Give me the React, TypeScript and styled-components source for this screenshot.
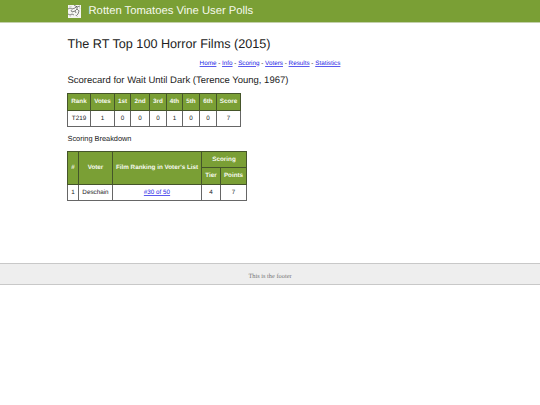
import React from "react";
import styled, { createGlobalStyle } from "styled-components";

const GlobalStyle = createGlobalStyle`
  * { box-sizing: border-box; }
  body {
    margin: 0;
    background: #fff;
    color: #222;
    font-family: "Liberation Sans", Arial, sans-serif;
    text-rendering: geometricPrecision;
  }
`;

const TopBar = styled.header`
  height: 23px;
  padding: 0 67.5px;
  display: flex;
  align-items: center;
  gap: 8px;
  background: #7a9f35;
  border-bottom: 1px solid #c3d0ab;
`;

const Logo = styled.svg`
  width: 13px;
  height: 13px;
  flex: none;
`;

const SiteName = styled.div`
  color: #f7faef;
  font-size: 11.25px;
  line-height: 20px;
  white-space: nowrap;
`;

const Main = styled.main`
  height: 240px;
  padding: 13.5px 67.5px 0;
`;

const PageTitle = styled.h1`
  margin: 0;
  font-size: 12.65px;
  line-height: 15px;
  font-weight: 400;
`;

const Nav = styled.nav`
  margin-top: 8px;
  font-size: 6.3px;
  line-height: 8px;
  text-align: center;
`;

const Link = styled.a`
  color: #1a1ae6;
  text-decoration: underline;
  text-decoration-color: #5a5aee;
`;

const FilmTitle = styled.h2`
  margin: 7px 0 0;
  font-size: 9.5px;
  line-height: 12px;
  font-weight: 400;
`;

const SectionTitle = styled.h3`
  margin: 7px 0;
  font-size: 7.38px;
  line-height: 10px;
  font-weight: 400;
`;

const Table = styled.table<{ $width: number; $top?: number }>`
  width: ${(p) => p.$width}px;
  margin-top: ${(p) => p.$top ?? 0}px;
  margin-left: -0.5px;
  table-layout: fixed;
  border-collapse: collapse;
  font-size: 6.3px;
  line-height: 8px;
  text-align: center;
  white-space: nowrap;
`;

const Col = styled.col<{ $width: number }>`
  width: ${(p) => p.$width}px;
`;

const Row = styled.tr<{ $height: number }>`
  height: ${(p) => p.$height}px;
`;

const Head = styled.th`
  padding: 0;
  border: 1px solid #45552a;
  background: #7a9f35;
  color: #f7faef;
`;

const Cell = styled.td`
  padding: 0;
  border: 1px solid #666;
`;

const Footer = styled.footer`
  height: 22px;
  padding-top: 4px;
  display: flex;
  align-items: center;
  justify-content: center;
  background: #eee;
  border-top: 1px solid #c8c8c8;
  border-bottom: 1px solid #c8c8c8;
  color: #777;
  font-family: "Liberation Serif", "Times New Roman", serif;
  font-size: 6.35px;
`;

const links = ["Home", "Info", "Scoring", "Voters", "Results", "Statistics"];
const ranks: [string, string, number][] = [
  ["Rank", "T219", 23],
  ["Votes", "1", 24],
  ["1st", "0", 16],
  ["2nd", "0", 19],
  ["3rd", "0", 17],
  ["4th", "1", 16],
  ["5th", "0", 17],
  ["6th", "0", 17],
  ["Score", "7", 24],
];
const voterColumns = [11, 34, 89, 19, 26];

export default function App() {
  return (
    <>
      <GlobalStyle />
      <TopBar>
        <Logo viewBox="0 0 13 13" fill="none">
          <path fill="#f5f5f1" d="M0 0h13v13H0z" />
          <path
            stroke="#444"
            strokeWidth=".65"
            d="M0 4l2-1 2 1 3-1 2-2M6 0l3 2 3-1M9 2v2l2 2-1 3-2 2M9 4L7 6 4 7 3 5M7 6l1 2M0 9l2 1 2-1 2 1"
          />
          <path stroke="#aaa" strokeWidth=".45" d="M1 1l3 1M11 1l1 3M3 10l-1 2M7 10l2 1 1 1M5 3L4 5M10 6l2-1" />
        </Logo>
        <SiteName>Rotten Tomatoes Vine User Polls</SiteName>
      </TopBar>
      <Main>
        <PageTitle>The RT Top 100 Horror Films (2015)</PageTitle>
        <Nav>
          {links.map((label, i) => (
            <React.Fragment key={label}>
              {i > 0 && " - "}
              <Link href="#">{label}</Link>
            </React.Fragment>
          ))}
        </Nav>
        <FilmTitle>Scorecard for Wait Until Dark (Terence Young, 1967)</FilmTitle>
        <Table $width={173} $top={6.5}>
          <colgroup>{ranks.map(([label, , width]) => <Col key={label} $width={width} />)}</colgroup>
          <tbody>
            <Row $height={17}>{ranks.map(([label]) => <Head key={label}>{label}</Head>)}</Row>
            <Row $height={16}>{ranks.map(([label, value]) => <Cell key={label}>{value}</Cell>)}</Row>
          </tbody>
        </Table>
        <SectionTitle>Scoring Breakdown</SectionTitle>
        <Table $width={179}>
          <colgroup>{voterColumns.map((width, i) => <Col key={i} $width={width} />)}</colgroup>
          <tbody>
            <Row $height={16}>
              <Head rowSpan={2}>#</Head>
              <Head rowSpan={2}>Voter</Head>
              <Head rowSpan={2}>Film Ranking in Voter's List</Head>
              <Head colSpan={2}>Scoring</Head>
            </Row>
            <Row $height={17}>
              <Head>Tier</Head>
              <Head>Points</Head>
            </Row>
            <Row $height={16}>
              <Cell>1</Cell>
              <Cell>Deschain</Cell>
              <Cell><Link href="#">#30 of 50</Link></Cell>
              <Cell>4</Cell>
              <Cell>7</Cell>
            </Row>
          </tbody>
        </Table>
      </Main>
      <Footer>This is the footer</Footer>
    </>
  );
}
